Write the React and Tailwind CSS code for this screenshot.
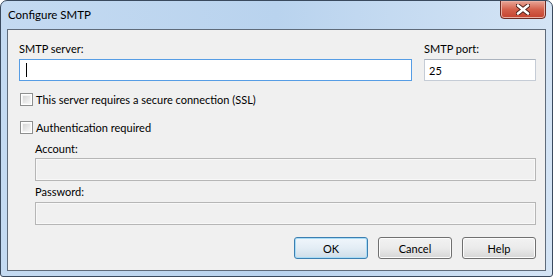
import React from "react";

const font = { fontFamily: 'Lato, "Noto Sans", "Liberation Sans", sans-serif' };

const Checkbox = ({ label }) => (
  <label className="flex items-center h-[13px] text-[11px] text-black">
    <span className="w-[13px] h-[13px] border border-[#8e8f8f] bg-white p-px shrink-0">
      <span className="block w-full h-full bg-gradient-to-br from-[#d6d6d6] to-[#f6f6f6] border border-[#f4f4f4]" />
    </span>
    <span className="ml-[3px] leading-[15px]">{label}</span>
  </label>
);

const Button = ({ children, primary }) => (
  <button
    className={
      "w-[74px] h-[22px] rounded-[3px] border text-[11px] text-black leading-none " +
      (primary
        ? "border-[#3c7fb1] bg-gradient-to-b from-[#f0f6fb] via-[#e3edf5] to-[#cfdde8] shadow-[inset_0_0_0_1px_#a9dcf6]"
        : "border-[#707070] bg-gradient-to-b from-[#f2f2f2] via-[#ebebeb] to-[#d6d6d6] shadow-[inset_0_0_0_1px_#fcfcfc]")
    }
  >
    {children}
  </button>
);

export default function App() {
  return (
    <div
      className="w-[553px] h-[277px] flex flex-col border border-[#3a4a5e] rounded-t-[7px] rounded-b-[3px] bg-gradient-to-r from-[#c4daf1] via-[#b9d3ee] to-[#d4e4f5] overflow-hidden"
      style={font}
    >
      <div className="h-[28px] flex items-start justify-between pl-[7px] pr-[6px] shrink-0">
        <span className="text-[11.5px] text-black mt-[6px] leading-[15px]">Configure SMTP</span>
        <button className="w-[46px] h-[19px] -mt-px rounded-b-[4px] border border-[#6d2c24] bg-gradient-to-b from-[#e8a597] via-[#d4604b] to-[#c4422e] flex items-center justify-center shadow-[inset_0_0_0_1px_#eab0a4]">
          <svg width="14" height="11" viewBox="0 0 14 11">
            <path
              d="M2 1.5 L12 9.5 M12 1.5 L2 9.5"
              stroke="#4a1e18"
              strokeWidth="4.4"
              strokeLinecap="round"
            />
            <path
              d="M2 1.5 L12 9.5 M12 1.5 L2 9.5"
              stroke="#ffffff"
              strokeWidth="2.6"
              strokeLinecap="round"
            />
          </svg>
        </button>
      </div>
      <div className="mx-[6px] mb-[5px] flex-1 border border-[#5f6b7a] bg-[#f0f0f0] flex flex-col pl-[11px] pr-[9px] pt-[11px] text-[11px] text-black">
        <div className="flex gap-[12px]">
          <div className="flex flex-col w-[393px]">
            <span className="leading-[15px]">SMTP server:</span>
            <div className="mt-[3px] h-[22px] border border-[#569de5] bg-white flex items-center pl-[6px]">
              <span className="w-px h-[14px] bg-black" />
            </div>
          </div>
          <div className="flex flex-col flex-1">
            <span className="leading-[15px]">SMTP port:</span>
            <div className="mt-[3px] h-[22px] border border-[#c5ccd6] border-t-[#abb3be] bg-white flex items-center pl-[4px] leading-none">
              25
            </div>
          </div>
        </div>
        <div className="mt-[12px] ml-px">
          <Checkbox label="This server requires a secure connection (SSL)" />
        </div>
        <div className="mt-[15px] ml-px">
          <Checkbox label="Authentication required" />
        </div>
        <div className="ml-[16px] flex flex-col">
          <span className="mt-[7px] leading-[15px]">Account:</span>
          <div className="mt-[2px] h-[23px] border border-[#b6b6b6] bg-[#f0f0f0] shadow-[inset_0_0_0_1px_#f8f8f8]" />
          <span className="mt-[3px] leading-[15px]">Password:</span>
          <div className="mt-[3px] h-[23px] border border-[#b6b6b6] bg-[#f0f0f0] shadow-[inset_0_0_0_1px_#f8f8f8]" />
        </div>
        <div className="mt-[12px] flex justify-end gap-[10px]">
          <Button primary>OK</Button>
          <Button>Cancel</Button>
          <Button>Help</Button>
        </div>
      </div>
    </div>
  );
}
